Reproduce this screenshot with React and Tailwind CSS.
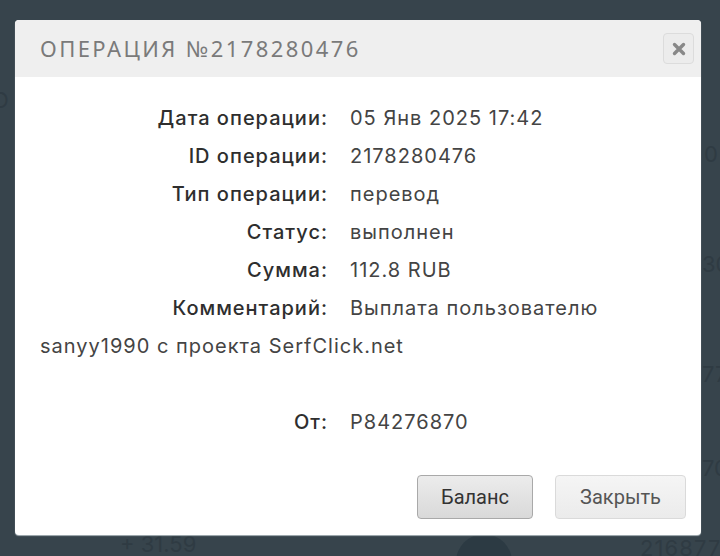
import React from 'react'

const rows = [
    { label: 'Дата операции:', value: '05 Янв 2025 17:42' },
    { label: 'ID операции:', value: '2178280476' },
    { label: 'Тип операции:', value: 'перевод' },
    { label: 'Статус:', value: 'выполнен' },
    { label: 'Сумма:', value: '112.8 RUB' },
    { label: 'Комментарий:', value: 'Выплата пользователю sanyy1990 с проекта SerfClick.net' },
]

const Row = ({ label, value }) => (
    <div>
        <span className="inline-block w-[288px] text-right font-medium text-[#2e2e2e]">{label}</span>
        <span className="ml-[22px] text-[#444]">{value}</span>
    </div>
)

const App = () => {
    return (
        <div className="relative w-[720px] h-[556px] overflow-hidden bg-[#37444c]" style={{ fontFamily: 'Inter, "Noto Sans", sans-serif' }}>
            {/* page behind the overlay */}
            <div className="absolute inset-0 text-[#2f3b43] text-[22px]">
                <span className="absolute left-[-8px] top-[84px]">O</span>
                <span className="absolute left-[704px] top-[138px]">0</span>
                <span className="absolute left-[702px] top-[248px]">30</span>
                <span className="absolute left-[702px] top-[358px]">77</span>
                <span className="absolute left-[702px] top-[452px]">70</span>
                <span className="absolute left-[120px] top-[528px]">+ 31.59</span>
                <span className="absolute left-[640px] top-[532px] tracking-wider">216877</span>
                <div className="absolute left-[456px] top-[534px] w-[56px] h-[56px] rounded-full bg-[#2c3a43]" />
            </div>

            <div className="absolute left-[15px] top-[20px] w-[686px] h-[515px] bg-white rounded-[4px] shadow-[0_1px_1px_rgba(180,190,195,0.9)] flex flex-col overflow-hidden">
                <div className="h-[57px] shrink-0 bg-[#efefef] flex items-center justify-between pl-[25px] pr-[7px]">
                    <h2 className="text-[22px] tracking-[0.11em] text-[#7a7a7a] font-normal" style={{ fontFamily: '"Noto Sans", sans-serif' }}>
                        ОПЕРАЦИЯ №2178280476
                    </h2>
                    <button className="w-[31px] h-[31px] rounded-[4px] border border-[#dcdcdc] bg-[#ececec] flex items-center justify-center">
                        <svg width="14" height="14" viewBox="0 0 14 14">
                            <path d="M2.5 2.5 L11.5 11.5 M11.5 2.5 L2.5 11.5" stroke="#888" strokeWidth="3.4" strokeLinecap="round" />
                        </svg>
                    </button>
                </div>

                <div className="px-[25px] pt-[22px] text-[20px] leading-[38px] tracking-[0.05em]">
                    {rows.map((r) => <Row key={r.label} {...r} />)}
                    <div className="h-[38px]" />
                    <Row label="От:" value="P84276870" />
                </div>

                <div className="mt-auto mb-[16px] mr-[15px] flex justify-end gap-[22px]" style={{ fontFamily: 'Roboto, sans-serif' }}>
                    <button className="w-[116px] h-[44px] rounded-[4px] border border-[#a9a9a9] bg-gradient-to-b from-[#ececec] to-[#d9d9d9] text-[20px] text-[#333]">
                        Баланс
                    </button>
                    <button className="w-[131px] h-[44px] rounded-[4px] border border-[#dadada] bg-gradient-to-b from-[#f5f5f5] to-[#ebebeb] text-[20px] text-[#555]">
                        Закрыть
                    </button>
                </div>
            </div>
        </div>
    )
}

export default App
